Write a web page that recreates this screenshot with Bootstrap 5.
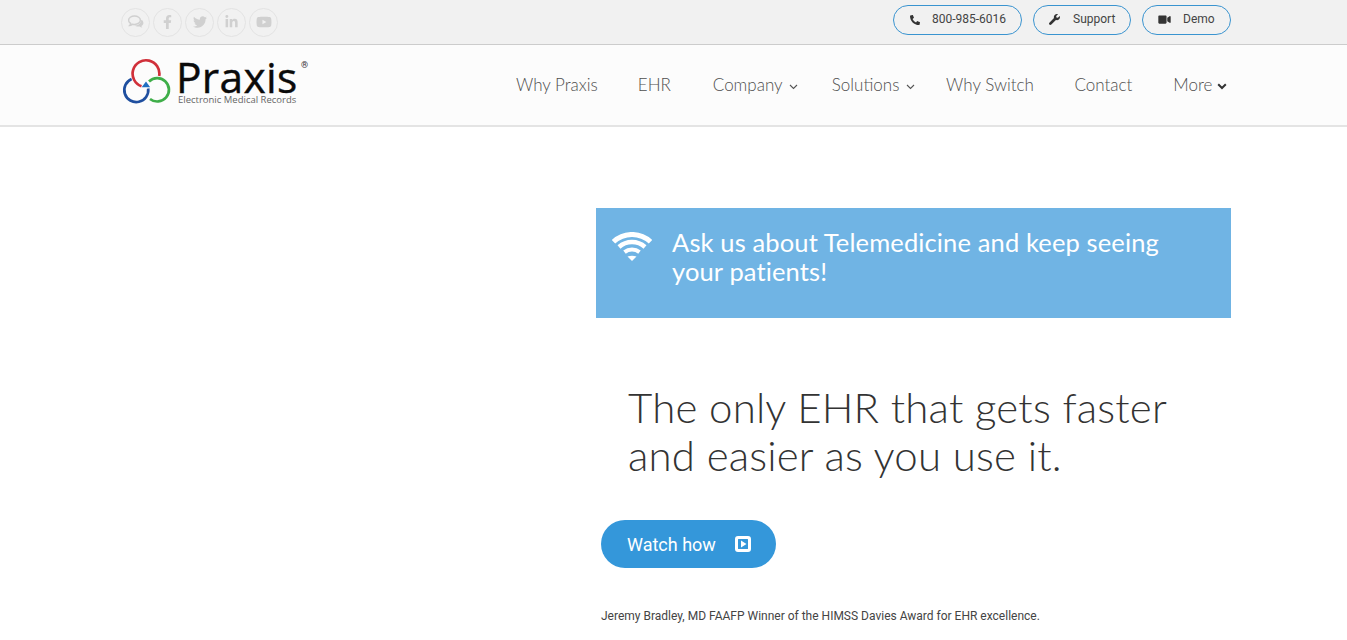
<!DOCTYPE html>
<html lang="en">
<head>
<meta charset="utf-8">
<title>Praxis EMR</title>
<link href="https://cdn.jsdelivr.net/npm/bootstrap@5.3.0/dist/css/bootstrap.min.css" rel="stylesheet">
<style>
html,body{height:640px;overflow:hidden;background:#fff;}
body{font-family:"Roboto",sans-serif;color:#333;}
.wrap-x{width:1140px;margin-left:106px;padding:0 15px;}
.topstrip{height:45px;background:#f1f1f1;border-bottom:1px solid #ccc;}
.soc-ico{width:29px;height:29px;border:1px solid #e3e3e3;border-radius:50%;color:#d0d0d0;margin-right:3px;}
.soc-ico svg{fill:currentColor;display:block;}
.pill-link{height:30px;border:1px solid #3a94d0;border-radius:15px;font-size:12px;color:#444;text-decoration:none;background:transparent;}
.pill-link svg{fill:#333;display:block;}
.pill-link span{position:relative;top:-1px;}
.mainbar{height:82px;background:#fcfcfc;border-bottom:2px solid #e4e4e4;}
.brand-mark{display:flex;text-decoration:none;color:#000;position:relative;height:60px;}
.brand-name{font-family:"Open Sans",sans-serif;font-size:42.5px;line-height:36px;height:36px;letter-spacing:.3px;font-weight:400;-webkit-text-stroke:.4px #0a0a0a;color:#0a0a0a;margin-top:1px;}
.brand-tag{font-family:"Open Sans",sans-serif;font-size:9.5px;line-height:10px;color:#666;margin-left:2px;white-space:nowrap;}
.brand-reg{position:absolute;left:180px;top:15px;font-size:9px;line-height:10px;color:#333;}
.menu-link{font-family:"Lato",sans-serif;font-weight:300;font-size:17px;color:#4f4f4f;text-decoration:none;white-space:nowrap;}
.menu-link svg{display:inline-block;vertical-align:1px;}
.tele-box{height:110px;background:#70b4e4;color:#fff;margin-top:81px;padding:20px 40px 0 16px;}
.tele-text{font-family:"Lato",sans-serif;font-weight:400;font-size:25.5px;line-height:29px;letter-spacing:.13px;padding-left:20px;}
.hero-head{font-family:"Lato",sans-serif;font-weight:300;font-size:42px;line-height:48px;letter-spacing:.17px;color:#333;margin:65px 0 0 32px;white-space:nowrap;}
.watch-btn{width:175px;height:48px;border-radius:24px;background:#3497da;color:#fff;font-size:18px;margin:41px 0 0 5px;padding:0;border:0;}
.watch-btn:hover{background:#3497da;color:#fff;}
.quote-line{font-size:12px;line-height:16px;color:#444;margin:40px 0 0 5px;white-space:nowrap;}
</style>
</head>
<body>
<div class="topstrip">
  <div class="wrap-x d-flex justify-content-between">
    <div class="d-flex align-items-center" style="height:44px;">
      <a class="soc-ico d-flex align-items-center justify-content-center" href="#" aria-label="Chat"><svg width="16" height="14" viewBox="0 0 16 14"><path d="M6.500 1C3.200 1 .6 2.900.6 5.200c0 1.300.8 2.500 2.100 3.300-.1.700-.5 1.300-1 1.900 1.100-.1 2.100-.5 3-1.200.6.100 1.200.2 1.800.2 3.300 0 5.900-1.900 5.900-4.200S9.800 1 6.500 1z" fill="none" stroke="currentColor" stroke-width="1.500"/><path d="M13.300 4.800c1.300.7 2.100 1.800 2.100 3.100 0 1.200-.8 2.300-2 3 .1.600.4 1.100.9 1.700-1-.1-1.900-.5-2.700-1.100-.5.100-1 .1-1.500.1-1.400 0-2.700-.4-3.600-1 3.500 0 6.600-2 6.800-5.800z"/></svg></a>
      <a class="soc-ico d-flex align-items-center justify-content-center" href="#" aria-label="Facebook"><svg width="9" height="14" viewBox="0 0 320 512"><path d="M279.14 288l14.22-92.66h-88.91v-60.13c0-25.35 12.42-50.06 52.24-50.06h40.42V6.26S260.43 0 225.36 0c-73.22 0-121.08 44.38-121.08 124.72v70.62H22.89V288h81.39v224h100.17V288z"/></svg></a>
      <a class="soc-ico d-flex align-items-center justify-content-center" href="#" aria-label="Twitter"><svg width="14" height="14" viewBox="0 0 512 512"><path d="M459.37 151.716c.325 4.548.325 9.097.325 13.645 0 138.72-105.583 298.558-298.558 298.558-59.452 0-114.68-17.219-161.137-47.106 8.447.974 16.568 1.299 25.34 1.299 49.055 0 94.213-16.568 130.274-44.832-46.132-.975-84.792-31.188-98.112-72.772 6.498.974 12.995 1.624 19.818 1.624 9.421 0 18.843-1.3 27.614-3.573-48.081-9.747-84.143-51.98-84.143-102.985v-1.299c13.969 7.797 30.214 12.67 47.431 13.319-28.264-18.843-46.781-51.005-46.781-87.391 0-19.492 5.197-37.36 14.294-52.954 51.655 63.675 129.3 105.258 216.365 109.807-1.624-7.797-2.599-15.918-2.599-24.04 0-57.828 46.782-104.934 104.934-104.934 30.213 0 57.502 12.67 76.67 33.137 23.715-4.548 46.456-13.32 66.599-25.34-7.798 24.366-24.366 44.833-46.132 57.827 21.117-2.273 41.584-8.122 60.426-16.243-14.292 20.791-32.161 39.308-52.628 54.253z"/></svg></a>
      <a class="soc-ico d-flex align-items-center justify-content-center" href="#" aria-label="LinkedIn"><svg width="13" height="14" viewBox="0 0 448 512"><path d="M100.28 448H7.4V148.9h92.88zM53.79 108.1C24.09 108.1 0 83.5 0 53.8a53.79 53.79 0 0 1 107.58 0c0 29.7-24.1 54.3-53.79 54.3zM447.9 448h-92.68V302.4c0-34.7-.7-79.2-48.29-79.2-48.29 0-55.69 37.7-55.69 76.7V448h-92.78V148.9h89.08v40.8h1.3c12.4-23.5 42.69-48.3 87.88-48.3 94 0 111.28 61.9 111.28 142.3V448z"/></svg></a>
      <a class="soc-ico d-flex align-items-center justify-content-center" href="#" aria-label="YouTube"><svg width="16" height="14" viewBox="0 0 576 512"><path d="M549.655 124.083c-6.281-23.65-24.787-42.276-48.284-48.597C458.781 64 288 64 288 64S117.22 64 74.629 75.486c-23.497 6.322-42.003 24.947-48.284 48.597-11.412 42.867-11.412 132.305-11.412 132.305s0 89.438 11.412 132.305c6.281 23.65 24.787 41.5 48.284 47.821C117.22 448 288 448 288 448s170.78 0 213.371-11.486c23.497-6.321 42.003-24.171 48.284-47.821 11.412-42.867 11.412-132.305 11.412-132.305s0-89.438-11.412-132.305zm-317.51 213.508V175.185l142.739 81.205-142.739 81.201z"/></svg></a>
    </div>
    <div class="d-flex align-items-center" style="height:39px;column-gap:11px;">
      <a class="pill-link d-flex align-items-center" style="width:129px;padding-left:16px;" href="#"><svg width="10" height="10" viewBox="0 0 512 512"><path transform="matrix(-1 0 0 1 512 0)" d="M493.4 24.6l-104-24c-11.3-2.6-22.9 3.3-27.5 13.9l-48 112c-4.2 9.8-1.4 21.3 6.9 28l60.6 49.6c-36 76.7-98.9 140.5-177.2 177.2l-49.6-60.6c-6.8-8.3-18.2-11.1-28-6.9l-112 48C3.9 366.5-2 378.1.6 389.4l24 104C27.1 504.2 36.7 512 48 512c256.1 0 464-207.5 464-464 0-11.2-7.7-20.9-18.6-23.4z"/></svg><span style="margin-left:12px;">800-985-6016</span></a>
      <a class="pill-link d-flex align-items-center" style="width:98px;padding-left:15px;" href="#"><svg width="11" height="11" viewBox="0 0 512 512"><path d="M507.73 109.1c-2.24-9.03-13.54-12.09-20.12-5.51l-74.36 74.36-67.88-11.31-11.31-67.88 74.36-74.36c6.62-6.62 3.43-17.9-5.66-20.16-47.38-11.74-99.55.91-136.58 37.93-39.64 39.64-50.55 97.1-34.05 147.2L18.74 402.76c-24.99 24.99-24.99 65.51 0 90.5 24.99 24.99 65.51 24.99 90.5 0l213.21-213.21c50.12 16.71 107.47 5.68 147.37-34.22 37.07-37.07 49.7-89.32 37.91-136.73z"/></svg><span style="margin-left:13px;">Support</span></a>
      <a class="pill-link d-flex align-items-center" style="width:89px;padding-left:15px;" href="#"><svg width="13" height="11" viewBox="0 0 576 512"><path d="M336.2 64H47.8C21.4 64 0 85.4 0 111.8v288.4C0 426.6 21.4 448 47.8 448h288.4c26.4 0 47.8-21.4 47.8-47.8V111.8c0-26.4-21.4-47.8-47.8-47.8zm189.4 37.7L416 177.3v157.4l109.6 75.5c21.2 14.6 50.4-.3 50.4-25.8V127.5c0-25.4-29.1-40.4-50.4-25.8z"/></svg><span style="margin-left:12px;">Demo</span></a>
    </div>
  </div>
</div>
<nav class="mainbar">
  <div class="wrap-x d-flex justify-content-between">
    <a class="brand-mark" style="padding-top:13px;" href="#">
      <svg width="50" height="48" viewBox="0 0 50 48" class="flex-shrink-0" style="margin-left:1px;" aria-hidden="true">
        <g fill="none" stroke-width="2.700">
          <path d="M37.200 18A13.400 13.400 0 1 0 19.500 28.300" stroke="#d0303a"/>
          <path d="M9.600 21A12 12 0 1 0 26.200 30.500" stroke="#1f4f9f"/>
          <path d="M27 23.500A11.700 11.700 0 1 1 28 41" stroke="#3fae49"/>
        </g>
        <path d="M24 23.500l-4.300 5.700h8.500z" fill="#1f6fc0"/>
      </svg>
      <div style="margin-left:4px;">
        <div class="brand-name">Praxis</div>
        <div class="brand-tag">Electronic Medical Records</div>
      </div>
      <span class="brand-reg">®</span>
    </a>
    <div class="d-flex align-items-center" style="height:80px;">
      <a class="menu-link" style="margin-right:40px;" href="#">Why Praxis</a>
      <a class="menu-link" style="margin-right:42px;" href="#">EHR</a>
      <a class="menu-link" style="margin-right:34px;" href="#">Company <svg width="9" height="6" viewBox="0 0 9 6" style="margin-left:2px;"><path d="M1 1l3.500 3.500L8 1" fill="none" stroke="#555" stroke-width="1.100"/></svg></a>
      <a class="menu-link" style="margin-right:31px;" href="#">Solutions <svg width="9" height="6" viewBox="0 0 9 6" style="margin-left:2px;"><path d="M1 1l3.500 3.500L8 1" fill="none" stroke="#555" stroke-width="1.100"/></svg></a>
      <a class="menu-link" style="margin-right:40.500px;" href="#">Why Switch</a>
      <a class="menu-link" style="margin-right:41px;" href="#">Contact</a>
      <a class="menu-link" style="margin-right:4px;" href="#">More <svg width="10" height="7" viewBox="0 0 10 7"><path d="M1.200 1.200L5 5l3.800-3.800" fill="none" stroke="#333" stroke-width="2"/></svg></a>
    </div>
  </div>
</nav>
<main class="wrap-x">
  <div class="row" style="--bs-gutter-x:30px;">
    <div class="col-5"></div>
    <div class="col-7">
      <div class="tele-box d-flex align-items-start">
        <svg width="40" height="33" viewBox="0 0 40 33" class="flex-shrink-0" style="margin-top:4px;" aria-hidden="true"><g fill="none" stroke="#fff" transform="translate(0 .5)"><path d="M1.500 9.300A27 27 0 0 1 38.500 9.300" stroke-width="5"/><path d="M7 14.500A19.500 19.500 0 0 1 33 14.500" stroke-width="4.400"/><path d="M12.500 19.600A12 12 0 0 1 27.500 19.600" stroke-width="4"/></g><path d="M15.500 24.500Q20 23 24.500 24.500L20 29z" fill="#fff"/></svg>
        <div class="tele-text">Ask us about Telemedicine and keep seeing your patients!</div>
      </div>
      <h1 class="hero-head">The only EHR that gets faster<br>and easier as you use it.</h1>
      <a class="btn watch-btn d-flex align-items-center" style="padding-left:26px;" href="#">Watch how
        <svg width="16" height="16" viewBox="0 0 16 16" style="margin-left:19px;" aria-hidden="true"><path fill="#fff" fill-rule="evenodd" d="M3 0h10a3 3 0 0 1 3 3v10a3 3 0 0 1-3 3H3a3 3 0 0 1-3-3V3a3 3 0 0 1 3-3zm.5 3a.5.5 0 0 0-.5.5v9a.5.5 0 0 0 .5.5h9a.5.5 0 0 0 .5-.5v-9a.5.5 0 0 0-.5-.5zM6 4.500L11.500 8 6 11.500z"/></svg>
      </a>
      <p class="quote-line">Jeremy Bradley, MD FAAFP Winner of the HIMSS Davies Award for EHR excellence.</p>
    </div>
  </div>
</main>
</body>
</html>
